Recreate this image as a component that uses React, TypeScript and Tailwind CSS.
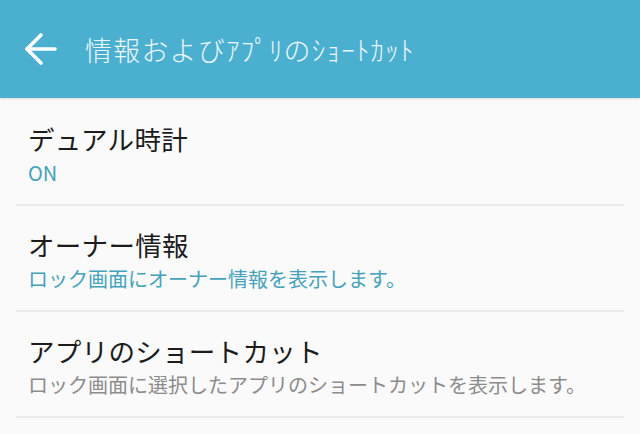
import { ArrowLeft } from 'lucide-react'

const items = [
  { title: 'デュアル時計', sub: 'ON', accent: true },
  { title: 'オーナー情報', sub: 'ロック画面にオーナー情報を表示します。', accent: true },
  { title: 'アプリのショートカット', sub: 'ロック画面に選択したアプリのショートカットを表示します。', accent: false },
]

export default function App() {
  return (
    <div
      className="w-[640px] h-[434px] overflow-hidden bg-[#fafafa]"
      style={{ fontFamily: '"Noto Sans CJK JP", "Noto Sans", sans-serif' }}
    >
      <header className="h-[98px] bg-[#4bafd0] flex items-center pl-[17px] shadow-[0_1px_2px_rgba(0,0,0,0.12)] relative">
        <ArrowLeft className="w-[48px] h-[48px] text-white" strokeWidth={1.8} />
        <h1 className="ml-[20px] text-[27px] leading-none font-light text-white/90 tracking-[1.2px]">
          情報およびｱﾌﾟﾘのｼｮｰﾄｶｯﾄ
        </h1>
      </header>
      <ul className="px-4 pt-[2px]">
        {items.map((it) => (
          <li
            key={it.title}
            className="h-[106px] border-b-2 border-[#ebebeb] flex flex-col justify-center pl-3 pt-[3px]"
          >
            <div className="text-[26.5px] leading-[38px] tracking-[0.3px] text-[#1c1c1c]">{it.title}</div>
            <div
              className={`text-[20px] leading-[29px] ${it.accent ? 'text-[#45a2ba]' : 'text-[#8c8c8c]'}`}
            >
              {it.sub}
            </div>
          </li>
        ))}
      </ul>
    </div>
  )
}
